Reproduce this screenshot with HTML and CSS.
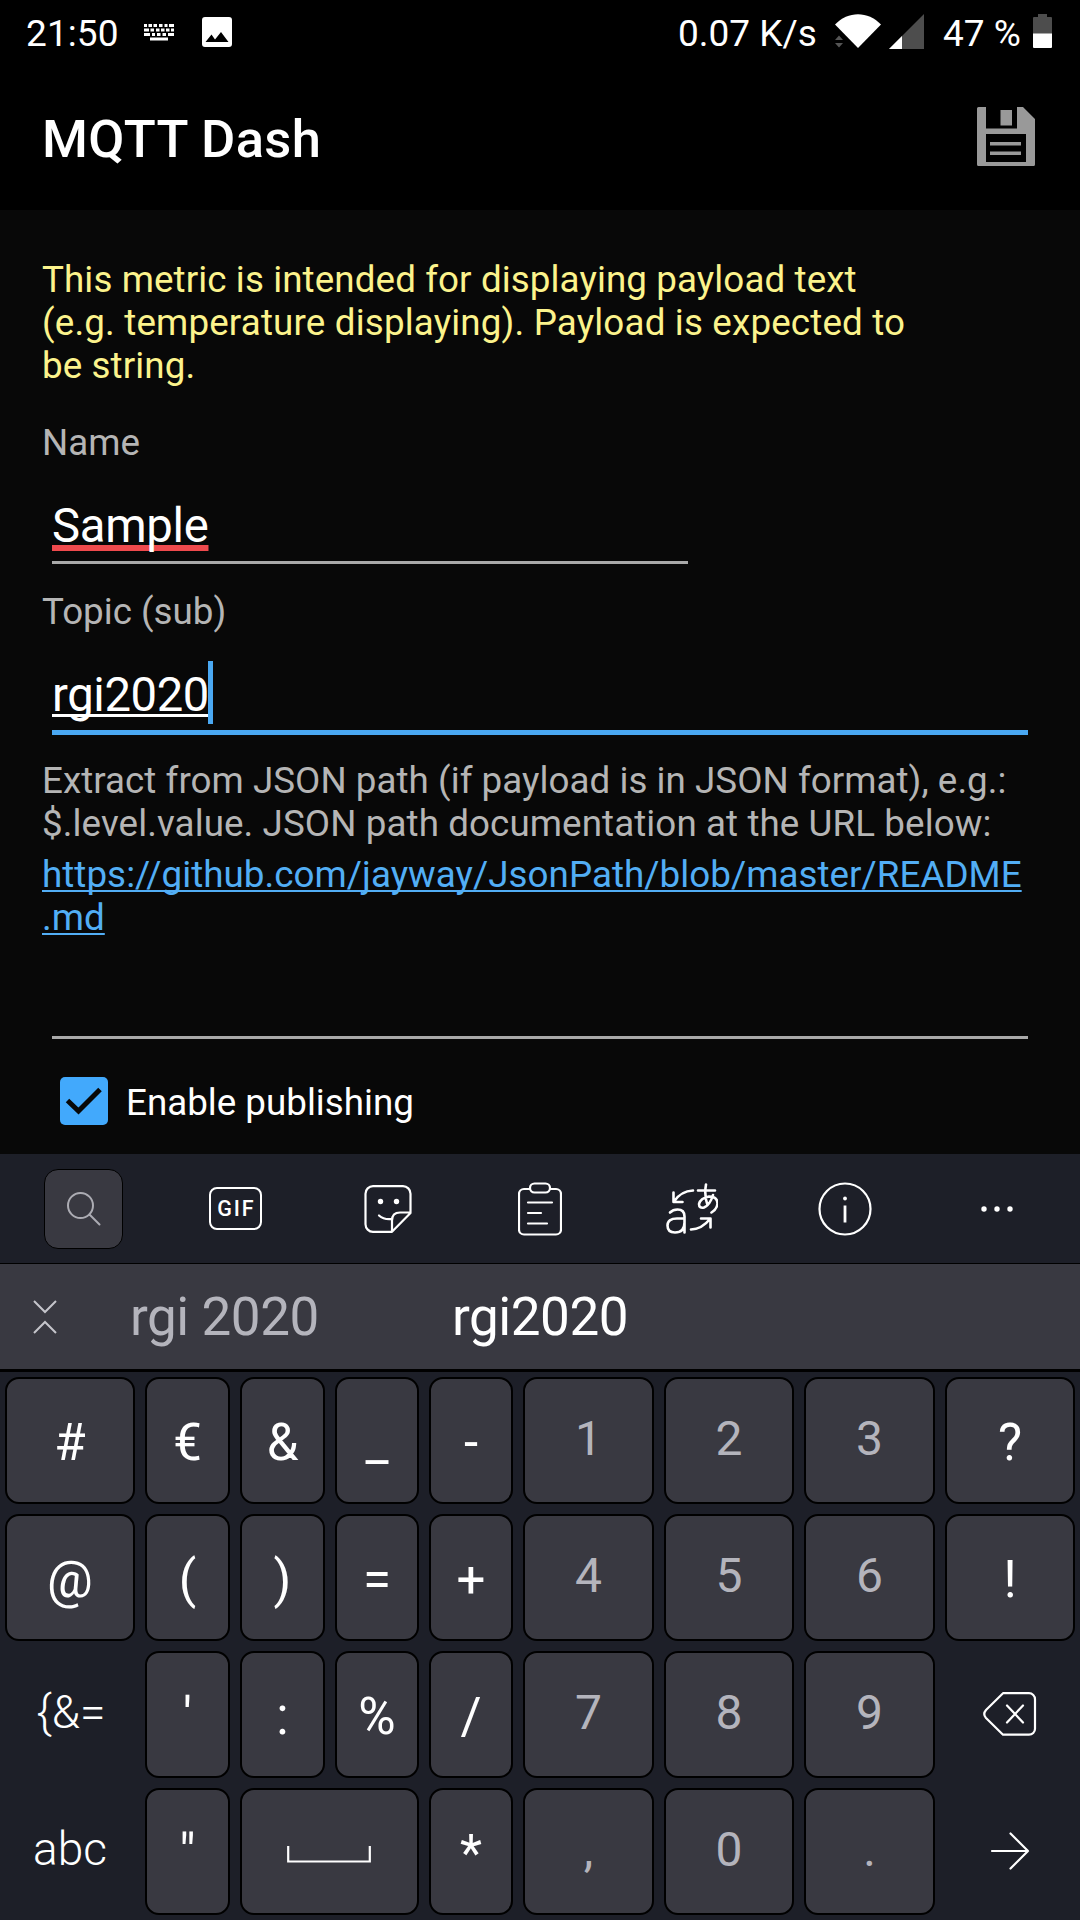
FILE: index.html
```html
<!DOCTYPE html>
<html lang="en">
<head>
<meta charset="utf-8">
<title>MQTT Dash</title>
<link rel="stylesheet" href="styles.css">
</head>
<body>
<div class="screen">
  <header class="status">
    <span class="clock">21:50</span>
    <svg class="ime" width="30" height="17" viewBox="0 0 30 17" fill="#fff"><path d="M0 0h3v3H0zM4.500 0h3.500v3H4.500zM9.500 0h3.500v3H9.500zM15 0h3.500v3H15zM20.500 0h3v3h-3zM25 0h5v3h-5zM0 4.500h5v3H0zM6.500 4.500H10v3H6.500zM12 4.500h3.500v3H12zM17 4.500h3.500v3H17zM22 4.500h3.500v3H22zM27 4.500h3v3h-3zM0 9h6v3H0zM8 9h3v3H8zM13 9h3.500v3H13zM18.500 9H22v3h-3.500zM24 9h6v3h-6zM6 13.500h18v3H6z"/></svg>
    <svg class="photo" width="30" height="30" viewBox="0 0 30 30"><path fill="#fff" fill-rule="evenodd" d="M3 0h24a3 3 0 0 1 3 3v24a3 3 0 0 1-3 3H3a3 3 0 0 1-3-3V3a3 3 0 0 1 3-3zM3.500 25h23L19 15l-6 7.500L9.500 17.500z"/></svg>
    <span class="rate">0.07 K/s</span>
    <svg class="wifi" width="48" height="35" viewBox="0 0 48 35"><path fill="#fff" d="M24 34 1 10.500C14-3.300 34-3.300 47 10.500z"/><path fill="#555" d="M1 26l4-4.500L9 26zM1 29h8l-4 4.500z"/></svg>
    <svg class="signal" width="35" height="35" viewBox="0 0 35 35"><path fill="#4d4d4d" d="M0 35 35 0v35z"/><path fill="#fff" d="M0 35 13 22v13z"/></svg>
    <span class="percent">47 %</span>
    <svg class="battery" width="19" height="34" viewBox="0 0 19 34"><path fill="#4d4d4d" d="M5 0h9v3h4a1 1 0 0 1 1 1v16H0V4a1 1 0 0 1 1-1h4z"/><path fill="#fff" d="M0 19.500h19V33a1 1 0 0 1-1 1H1a1 1 0 0 1-1-1z"/></svg>
  </header>

  <div class="appbar">
    <h1>MQTT Dash</h1>
    <svg class="save" width="58" height="59" viewBox="0 0 58 59"><path fill="#999" fill-rule="evenodd" d="M1.500 0H9v21.500h31V0h6l12 12v45.500a1.500 1.500 0 0 1-1.500 1.500h-55A1.500 1.500 0 0 1 0 57.500v-56A1.500 1.500 0 0 1 1.500 0zM9 27v28h40V27zM23.500 3H35v15.500H23.500zM13 35h31v3.500H13zM13 44.500h31V48H13z"/></svg>
  </div>

  <main class="form">
    <p class="intro">This metric is intended for displaying payload text<br><span class="loose">(e.g. temperature displaying). Payload is expected to</span><br>be string.</p>
    <label class="label name">Name</label>
    <div class="field short"><span class="typo">Sample</span></div>
    <label class="label">Topic (sub)</label>
    <div class="field active"><span class="composing">rgi2020</span><i class="caret"></i></div>
    <p class="label help">Extract from JSON path (if payload is in JSON format), e.g.:<br><span class="loose">$.level.value. JSON path documentation at the URL below:</span></p>
    <a class="link">https://github.com/jayway/JsonPath/blob/master/README<br>.md</a>
    <div class="field empty"></div>
    <div class="check">
      <svg width="48" height="48" viewBox="0 0 48 48"><rect width="48" height="48" rx="5" fill="#42a9fc"/><path d="M7.500 23.500 18.500 34 40 12.500" fill="none" stroke="#080808" stroke-width="5"/></svg>
      <span>Enable publishing</span>
    </div>
  </main>

  <section class="keyboard">
    <div class="tools">
      <span class="search"><svg width="34" height="34" viewBox="0 0 34 34" fill="none" stroke="#acacb3" stroke-width="2"><circle cx="13.500" cy="13.500" r="12.500"/><path d="m22.500 22.500 10 10" stroke-linecap="round"/></svg></span>
      <span class="gif">GIF</span>
      <svg width="48" height="48" viewBox="0 0 48 48" fill="none" stroke="#fff" stroke-width="2.200" stroke-linejoin="round" stroke-linecap="round"><path d="M9 1.200h30a7.500 7.500 0 0 1 7.500 7.500V28L28 46.800H9a7.500 7.500 0 0 1-7.500-7.500V8.700A7.500 7.500 0 0 1 9 1.200zM46.500 27.500H36q-8 0-8 8v11M15 30.500q5 4.500 13 3.500"/><circle cx="16.500" cy="16.500" r="2.700" fill="#fff" stroke="none"/><circle cx="32.500" cy="16.500" r="2.700" fill="#fff" stroke="none"/></svg>
      <svg width="44" height="54" viewBox="0 0 44 54" fill="none" stroke="#fff" stroke-width="2.200" stroke-linejoin="round" stroke-linecap="round"><path d="M12 7H6a5 5 0 0 0-5 5v35.500a5 5 0 0 0 5 5h32a5 5 0 0 0 5-5V12a5 5 0 0 0-5-5h-6"/><rect x="12" y="1.500" width="20" height="9" rx="4.500"/><path d="M10 20.500h24M10 31h13M10 41.500h19"/></svg>
      <svg width="52" height="52" viewBox="0 0 52 52" fill="none" stroke="#fff" stroke-width="2.600" stroke-linecap="round" stroke-linejoin="round"><path d="M27 7.500Q15 8 8 18.500M7.500 9.500v9.500h9M25 46.500q11-.500 19-10.500M35 35.500h9.500v9"/><path d="M4 29.500q3-3 7.500-3 7 0 7 7V49.500M18.500 35.500H11Q1.500 35.500 1.500 42.500q0 7 7.500 7 9.500 0 9.500-10"/><path d="M32 7.500h17M40 1.500q-2 11 1.500 20.500M47 12q-3 10-9 12.500-5 1-5-3.500 1.500-6 10-7.500 8.500 0 8.500 7-.500 5.500-6 9"/></svg>
      <svg width="54" height="54" viewBox="0 0 54 54" fill="none" stroke="#fff" stroke-width="2.200"><circle cx="27" cy="27" r="25.500"/><path d="M27 23.500v17" stroke-width="2.800"/><circle cx="27" cy="16.500" r="1.900" fill="#fff" stroke="none"/></svg>
      <svg width="34" height="8" viewBox="0 0 34 8" fill="#fff"><circle cx="4" cy="4" r="2.700"/><circle cx="17" cy="4" r="2.700"/><circle cx="30" cy="4" r="2.700"/></svg>
    </div>
    <div class="suggest">
      <svg class="collapse" width="26" height="36" viewBox="0 0 26 36" fill="none" stroke="#c5c5cb" stroke-width="2"><path d="m2 2 11 11L24 2M2 34l11-11 11 11"/></svg>
      <span class="alt">rgi 2020</span>
      <span class="best">rgi2020</span>
    </div>
    <div class="keys">
      <span class="key">#</span><span class="key">€</span><span class="key">&amp;</span><span class="key">_</span><span class="key">-</span><span class="key num">1</span><span class="key num">2</span><span class="key num">3</span><span class="key">?</span>
      <span class="key">@</span><span class="key">(</span><span class="key">)</span><span class="key">=</span><span class="key">+</span><span class="key num">4</span><span class="key num">5</span><span class="key num">6</span><span class="key">!</span>
      <span class="key flat more">{&amp;=</span><span class="key">'</span><span class="key">:</span><span class="key">%</span><span class="key">/</span><span class="key num">7</span><span class="key num">8</span><span class="key num">9</span>
      <span class="key flat icon"><svg width="54" height="44" viewBox="0 0 54 44" fill="none" stroke="#fff" stroke-width="2.200" stroke-linejoin="round" stroke-linecap="round"><path d="M20 1.200h26a6 6 0 0 1 6 6v29.500a6 6 0 0 1-6 6H20L3 26q-3.500-4 0-8z"/><path d="m24 13.500 16 17M40 13.500l-16 17"/></svg></span>
      <span class="key flat">abc</span><span class="key">"</span>
      <span class="key space icon"><svg width="84" height="17" viewBox="0 0 84 17" fill="none" stroke="#fff" stroke-width="2.200"><path d="M1.200 0v15.500h81.600V0"/></svg></span>
      <span class="key">*</span><span class="key num">,</span><span class="key num">0</span><span class="key num">.</span>
      <span class="key flat icon"><svg width="40" height="38" viewBox="0 0 40 38" fill="none" stroke="#fff" stroke-width="2.200" stroke-linecap="round" stroke-linejoin="round"><path d="M2 19h36M20.500 1.500 38 19 20.500 36.500"/></svg></span>
    </div>
  </section>
</div>
</body>
</html>
```
FILE: styles.css
```css
* { box-sizing: border-box; }
body { margin: 0; background: #080808; color: #fff; font-family: Roboto, sans-serif; }
svg { display: block; flex: none; }
h1, p { margin: 0; }

.screen { width: 1080px; height: 1920px; overflow: hidden; display: flex; flex-direction: column; background: #080808; }

.status { height: 65px; flex: none; background: #000; display: flex; align-items: flex-start; padding-left: 26px; font-size: 37px; line-height: 40px; white-space: nowrap; }
.status span { padding-top: 14px; }
.clock { width: 118px; letter-spacing: .1px; }
.ime { margin-top: 24px; }
.photo { margin: 17px 0 0 28px; }
.rate { margin-left: 446px; width: 156px; }
.wifi { margin-top: 14px; }
.signal { margin: 14px 0 0 7px; }
.percent { margin-left: 19px; width: 90px; }
.battery { margin-top: 14px; }

.appbar { height: 145px; flex: none; background: #000; display: flex; justify-content: space-between; padding: 42px 45px 0 42px; }
.appbar h1 { font-size: 52.500px; line-height: 64px; font-weight: 500; letter-spacing: .35px; }

.form { height: 944px; flex: none; padding: 48px 42px 0; font-size: 36.750px; line-height: 43px; white-space: nowrap; }
.intro { color: #fcf38c; letter-spacing: .1px; }
.intro .loose { letter-spacing: .165px; }
.label { display: block; color: #b5b5b5; }
.name { margin-top: 34px; }
.field { margin: 34px 10px 0; height: 66px; border-bottom: 3px solid #a9a9a9; font-size: 47.250px; line-height: 56px; display: flex; }
.short { width: 636px; margin-bottom: 26px; }
.typo { letter-spacing: -.3px; text-decoration: underline #ef4a4d 6px; text-underline-offset: 3px; text-decoration-skip-ink: none; }
.active { height: 68px; border-bottom: 5px solid #4aa8f2; }
.composing { letter-spacing: -.4px; text-decoration: underline 2.500px; text-underline-offset: 3px; text-decoration-skip-ink: none; }
.caret { width: 5px; height: 63px; margin: -6px 0 0 -1px; background: #4aa8f2; }
.help { margin-top: 24px; letter-spacing: .04px; }
.help .loose { letter-spacing: .09px; }
.link { display: block; margin-top: 8px; color: #52aef5; letter-spacing: .05px; text-decoration: underline 2px; text-underline-offset: 3px; text-decoration-skip-ink: none; }
.empty { height: 66px; }
.check { display: flex; align-items: center; gap: 18px; margin-top: 38px; padding-left: 18px; height: 48px; }
.check span { padding-top: 2px; }

.keyboard { height: 766px; flex: none; background: #1d1f28; }
.tools { height: 110px; border-bottom: 1px solid #000; padding: 0 7px; display: grid; grid-template-columns: repeat(7, 1fr); align-items: center; justify-items: center; }
.search { width: 79px; height: 80px; border: 1px solid #000; border-radius: 14px; background: #393941; display: flex; align-items: center; justify-content: center; padding-left: 2px; }
.gif { width: 53px; height: 43px; border: 2.500px solid #fff; border-radius: 8px; font-weight: 500; font-size: 21.500px; line-height: 39px; letter-spacing: 2px; text-align: center; padding-left: 2px; }
.suggest { height: 108px; border-bottom: 3px solid #000; background: #393941; display: flex; align-items: flex-start; font-size: 53px; line-height: 62px; letter-spacing: -.45px; white-space: nowrap; }
.collapse { margin: 35px 0 0 32px; }
.alt { margin: 22px 0 0 72px; width: 322px; color: #b4b4bc; }
.best { margin-top: 22px; }

.keys { padding: 5px; display: grid; grid-template-columns: 130px 85px 85px 84px 84px 131px 130px 131px 130px; grid-auto-rows: 127px; gap: 10px; }
.key { display: flex; align-items: center; justify-content: center; border: 2px solid #000; border-radius: 14px; background: #393941; font-size: 51px; line-height: 60px; padding-top: 4px; white-space: nowrap; }
.num { font-size: 48px; color: #b4b4bc; padding: 0 0 4px; }
.flat { border-color: transparent; background: none; font-size: 46px; font-weight: 300; padding: 0 0 6px; }
.more { padding-left: 2px; }
.icon { padding: 0 0 2px; }
.space { grid-column: span 2; padding: 6px 2px 0 0; }
```
